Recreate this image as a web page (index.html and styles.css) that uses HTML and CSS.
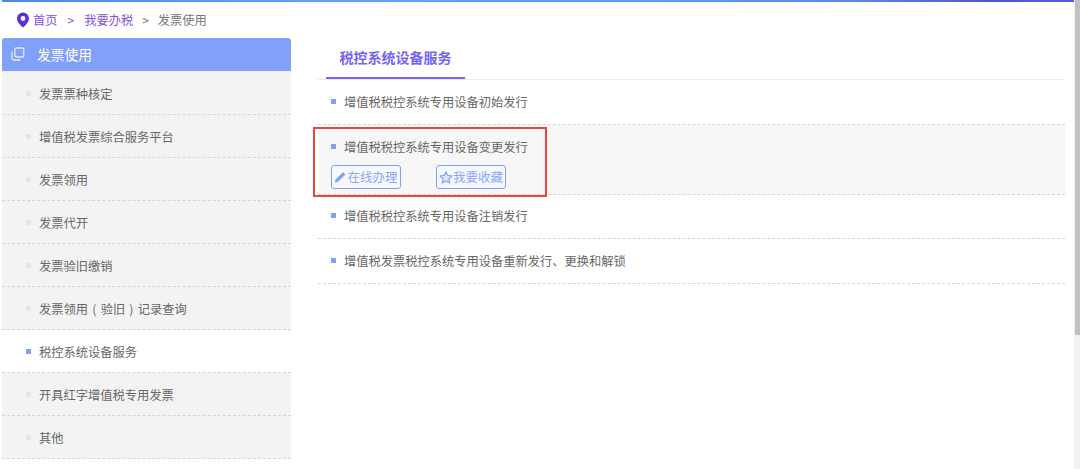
FILE: index.html
```html
<!DOCTYPE html>
<html lang="zh-CN">
<head>
<meta charset="utf-8">
<title>发票使用</title>
<link rel="stylesheet" href="styles.css">
</head>
<body>
<div class="window">
  <div class="page">
    <div class="topbar"></div>
    <nav class="crumbs">
      <svg class="pin" viewBox="0 0 14 16" width="14" height="16"><path fill-rule="evenodd" d="M7 0.5a6 6 0 0 0-6 6c0 3.800 4 7.300 6 9 2-1.700 6-5.200 6-9a6 6 0 0 0-6-6zm0 3.600a2.400 2.400 0 1 1 0 4.800 2.400 2.400 0 0 1 0-4.800z"/></svg>
      <a class="crumb-link">首页</a><span class="sep">&gt;</span>
      <a class="crumb-link">我要办税</a><span class="sep sep-grey">&gt;</span>
      <span class="crumb-current">发票使用</span>
    </nav>
    <div class="columns">
      <aside class="side">
        <div class="side-head">
          <svg class="copy" viewBox="0 0 14 14" width="14" height="14"><rect x="3.800" y="1" width="9" height="9" rx="1.600"/><path d="M1 4.600v6.600c0 1 .8 1.800 1.800 1.800h6.600"/></svg>
          <span>发票使用</span>
        </div>
        <ul class="side-list">
          <li class="side-item">发票票种核定</li>
          <li class="side-item">增值税发票综合服务平台</li>
          <li class="side-item">发票领用</li>
          <li class="side-item">发票代开</li>
          <li class="side-item">发票验旧缴销</li>
          <li class="side-item wide">发票领用 ( 验旧 ) 记录查询</li>
          <li class="side-item active">税控系统设备服务</li>
          <li class="side-item">开具红字增值税专用发票</li>
          <li class="side-item">其他</li>
        </ul>
      </aside>
      <main class="main">
        <div class="tabs"><div class="tab">税控系统设备服务</div></div>
        <ul class="rows">
          <li class="row"><span class="row-text">增值税税控系统专用设备初始发行</span></li>
          <li class="row open">
            <span class="row-text">增值税税控系统专用设备变更发行</span>
            <div class="actions">
              <a class="btn"><svg viewBox="0 0 14 14" width="13" height="14"><path class="fill" d="M1.500 10 9.800 1.700l2.500 2.500L4 12.500l-3 .8z"/></svg>在线办理</a>
              <a class="btn"><svg viewBox="0 0 14 14" width="14" height="15"><path class="line" d="M7 1.200l1.800 3.700 4.200.6-3 2.900.7 4.100L7 10.600l-3.700 1.900.7-4.100-3-2.900 4.200-.6z"/></svg>我要收藏</a>
            </div>
            <div class="redbox"></div>
          </li>
          <li class="row"><span class="row-text">增值税税控系统专用设备注销发行</span></li>
          <li class="row"><span class="row-text">增值税发票税控系统专用设备重新发行、更换和解锁</span></li>
        </ul>
      </main>
    </div>
  </div>
  <div class="scrollbar"><div class="thumb"></div></div>
</div>
</body>
</html>
```
FILE: styles.css
```css
* { box-sizing: border-box; }
html, body { margin: 0; height: 100%; overflow: hidden; background: #fff; }
body { font: 12.25px/20px "Noto Sans CJK SC", "Liberation Sans", sans-serif; color: #666; }
ul { list-style: none; margin: 0; padding: 0; }

.window { display: flex; height: 469px; }
.page { flex: 1; min-width: 0; overflow: hidden; }
.scrollbar { width: 6px; background: #f1f1f1; padding-left: 1px; }
.thumb { height: 335px; background: #c1c1c1; }

.topbar {
  height: 2px; margin-left: 2px;
  background: linear-gradient(90deg, #4f86ea 0%, #5fa5f5 30%, #5b9df5 60%, #5f86e4 80%, #4a58d0 92%, #4f5fdc 100%);
}

.crumbs { display: flex; align-items: center; height: 36px; padding-left: 16px; }
.pin { fill: #5b2fd6; margin-right: 3px; }
.crumb-link { color: #8a4fe0; }
.sep { color: #8a4fe0; margin: 0 10px; font-size: 12px; }
.sep-grey { color: #777; margin: 0 9px; }
.crumb-current { color: #777; }

.columns { display: flex; align-items: flex-start; }

.side { width: 289px; margin-left: 2px; flex: none; }
.side-head {
  display: flex; align-items: center; height: 33px; padding: 0 0 1px 9px;
  background: #81a0f8; color: #fff; font-size: 13.75px; border-radius: 3px 3px 0 0;
}
.copy { fill: none; stroke: #e3eafd; stroke-width: 1.3; margin-right: 12px; }
.side-list { background: #f3f3f3; }
.side-item {
  position: relative; height: 43px; padding: 12px 0 0 37px;
  border-bottom: 1px dashed #d6d6d6;
}
.side-item:first-child { height: 44px; padding-top: 13px; }
.side-item.wide { word-spacing: 1.5px; }
.side-item::before {
  content: ""; position: absolute; left: 24px; top: 19px;
  width: 5px; height: 5px; background: #e4e4ea;
}
.side-item:first-child::before { top: 20px; }
.side-item.active { background: #fff; }
.side-item.active::before { background: #81a0f8; }

.main { flex: 1; min-width: 0; margin: 4px 9px 0 27px; }
.tabs { height: 38px; border-bottom: 1px solid #ecebf2; }
.tab {
  width: 139px; margin-left: 8px; height: 37px; text-align: center;
  padding-top: 5px; font-size: 14px; font-weight: 700; color: #7364f5;
  border-bottom: 2px solid #7364f5;
}
.row {
  position: relative; padding: 12px 0 0 26px; height: 45px;
  border-bottom: 1px dashed #d6d6d6;
}
.row::before {
  content: ""; position: absolute; left: 13px; top: 19px;
  width: 5px; height: 5px; background: #81a0f8;
}
.row-text { display: block; }
.row:nth-child(2) { height: 70px; background: #f7f7f7; padding-top: 12px; }
.row:nth-child(3) { height: 44px; padding-top: 11px; }
.row:nth-child(3)::before { top: 18px; }

.actions { display: flex; gap: 35px; margin: 8px 0 0 -13px; }
.btn {
  display: flex; align-items: center; justify-content: center;
  width: 70px; height: 24px; border: 1px solid #81a0f8; border-radius: 3px;
  color: #8aa6f8; font-size: 12.5px; background: #f7f9ff;
}
.btn svg { flex: none; }
.fill { fill: #81a0f8; }
.line { fill: #dbe5ff; stroke: #81a0f8; stroke-width: 1.100; stroke-linejoin: round; }

.redbox {
  position: absolute; left: -5px; top: 2px; width: 234px; height: 70px;
  border: 2px solid #f04040; pointer-events: none;
}
```
